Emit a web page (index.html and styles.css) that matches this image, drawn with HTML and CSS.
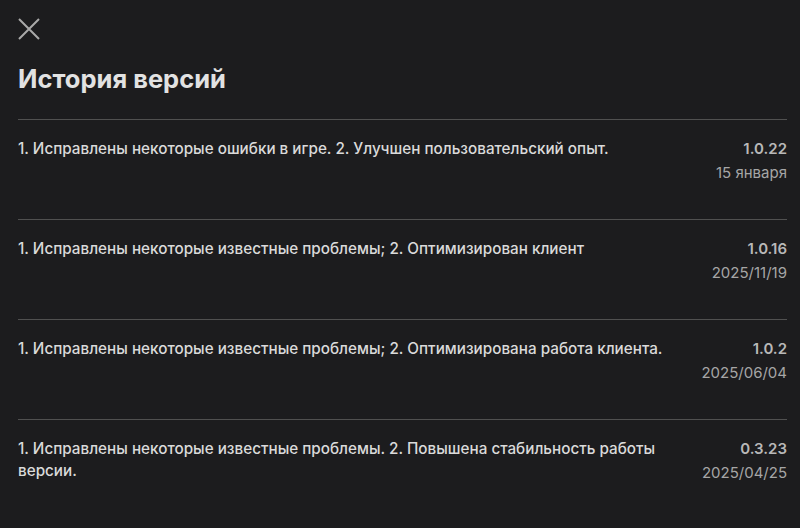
FILE: index.html
```html
<!DOCTYPE html>
<html lang="ru">
<head>
    <meta charset="UTF-8">
    <meta name="viewport" content="width=device-width, initial-scale=1.0">
    <title>История версий</title>
    <link rel="stylesheet" href="styles.css">
</head>
<body>
    <div class="page">
        <button class="close" aria-label="Закрыть">
            <svg width="22" height="22" viewBox="0 0 22 22">
                <path d="M1 1 L21 21 M21 1 L1 21" stroke="#a9a9a9" stroke-width="2" fill="none"/>
            </svg>
        </button>

        <h1>История версий</h1>

        <ul class="versions">
            <li class="item">
                <div class="desc">1. Исправлены некоторые ошибки в игре. 2. Улучшен пользовательский опыт.</div>
                <div class="meta">
                    <div class="num">1.0.22</div>
                    <div class="date">15 января</div>
                </div>
            </li>
            <li class="item">
                <div class="desc">1. Исправлены некоторые известные проблемы; 2. Оптимизирован клиент</div>
                <div class="meta">
                    <div class="num">1.0.16</div>
                    <div class="date">2025/11/19</div>
                </div>
            </li>
            <li class="item">
                <div class="desc">1. Исправлены некоторые известные проблемы; 2. Оптимизирована работа клиента.</div>
                <div class="meta">
                    <div class="num">1.0.2</div>
                    <div class="date">2025/06/04</div>
                </div>
            </li>
            <li class="item">
                <div class="desc">1. Исправлены некоторые известные проблемы. 2. Повышена стабильность работы версии.</div>
                <div class="meta">
                    <div class="num">0.3.23</div>
                    <div class="date">2025/04/25</div>
                </div>
            </li>
        </ul>
    </div>
</body>
</html>
```

FILE: styles.css
```css
body {
    margin: 0;
    background-color: #1c1c1e;
    font-family: Inter, "Liberation Sans", Arial, sans-serif;
    color: #dadada;
}

.page {
    padding: 18px 13px 0 18px;
}

.close {
    display: block;
    padding: 0;
    border: none;
    background: none;
    width: 22px;
    height: 22px;
    cursor: pointer;
}

.close svg {
    display: block;
}

h1 {
    margin: 24px 0 0 0;
    font-size: 25.5px;
    line-height: 30px;
    font-weight: 700;
    color: #e2e2e2;
}

.versions {
    list-style: none;
    margin: 25px 0 0 0;
    padding: 0;
}

.item {
    display: flex;
    justify-content: space-between;
    gap: 10px;
    border-top: 1px solid #505050;
    height: 100px;
    padding-top: 18px;
    box-sizing: border-box;
}

.desc {
    font-size: 15.25px;
    font-weight: 500;
    line-height: 22px;
    max-width: 680px;
}

.meta {
    text-align: right;
    white-space: nowrap;
}

.num {
    font-size: 15px;
    line-height: 22px;
    font-weight: 600;
    color: #b8b8b8;
}

.date {
    margin-top: 2px;
    font-size: 15px;
    line-height: 22px;
    color: #a6a6a6;
}
```
